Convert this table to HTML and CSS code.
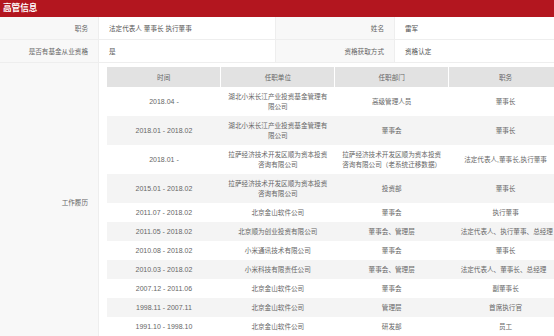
FILE: index.html
```html
<!DOCTYPE html>
<html lang="zh-CN">
<head>
  <meta charset="UTF-8" />
  <title>高管信息</title>
  <link rel="stylesheet" href="styles.css">
</head>
<body>
  <section class="panel">
    <h2 class="panel-title">高管信息</h2>
    <table class="info-table">
      <colgroup>
        <col style="width:99px">
        <col style="width:177px">
        <col style="width:119px">
        <col style="width:181px">
      </colgroup>
      <tr>
        <td class="label">职务</td>
        <td class="value">法定代表人 董事长 执行董事</td>
        <td class="label">姓名</td>
        <td class="value">雷军</td>
      </tr>
      <tr>
        <td class="label">是否有基金从业资格</td>
        <td class="value">是</td>
        <td class="label">资格获取方式</td>
        <td class="value">资格认定</td>
      </tr>
      <tr>
        <td class="label">工作履历</td>
        <td class="history-cell" colspan="3">
          <table class="history">
            <thead>
              <tr>
                <th>时间</th>
                <th>任职单位</th>
                <th>任职部门</th>
                <th>职务</th>
              </tr>
            </thead>
            <tbody>
              <tr>
                <td class="date">2018.04 -</td>
                <td>湖北小米长江产业投资基金管理有限公司</td>
                <td>高级管理人员</td>
                <td>董事长</td>
              </tr>
              <tr>
                <td class="date">2018.01 - 2018.02</td>
                <td>湖北小米长江产业投资基金管理有限公司</td>
                <td>董事会</td>
                <td>董事长</td>
              </tr>
              <tr>
                <td class="date">2018.01 -</td>
                <td>拉萨经济技术开发区顺为资本投资咨询有限公司</td>
                <td>拉萨经济技术开发区顺为资本投资咨询有限公司（老系统迁移数据）</td>
                <td>法定代表人,董事长,执行董事</td>
              </tr>
              <tr>
                <td class="date">2015.01 - 2018.02</td>
                <td>拉萨经济技术开发区顺为资本投资咨询有限公司</td>
                <td>投资部</td>
                <td>董事长</td>
              </tr>
              <tr>
                <td class="date">2011.07 - 2018.02</td>
                <td>北京金山软件公司</td>
                <td>董事会</td>
                <td>执行董事</td>
              </tr>
              <tr>
                <td class="date">2011.05 - 2018.02</td>
                <td>北京顺为创业投资有限公司</td>
                <td>董事会、管理层</td>
                <td class="nowrap">法定代表人、执行董事、总经理</td>
              </tr>
              <tr>
                <td class="date">2010.08 - 2018.02</td>
                <td>小米通讯技术有限公司</td>
                <td>董事会</td>
                <td>董事长</td>
              </tr>
              <tr>
                <td class="date">2010.03 - 2018.02</td>
                <td>小米科技有限责任公司</td>
                <td>董事会、管理层</td>
                <td class="nowrap">法定代表人、董事长、总经理</td>
              </tr>
              <tr>
                <td class="date">2007.12 - 2011.06</td>
                <td>北京金山软件公司</td>
                <td>董事会</td>
                <td>副董事长</td>
              </tr>
              <tr>
                <td class="date">1998.11 - 2007.11</td>
                <td>北京金山软件公司</td>
                <td>管理层</td>
                <td>首席执行官</td>
              </tr>
              <tr>
                <td class="date">1991.10 - 1998.10</td>
                <td>北京金山软件公司</td>
                <td>研发部</td>
                <td>员工</td>
              </tr>
            </tbody>
          </table>
        </td>
      </tr>
    </table>
  </section>
</body>
</html>
```

FILE: styles.css
```css
body {
  margin: 0;
  padding: 0;
  overflow: hidden;
  background: #fff;
  font-family: "Liberation Sans", "Noto Sans CJK SC", sans-serif;
  color: #666;
}

.panel {
  width: 576px;
}

.panel-title {
  margin: 0;
  height: 17px;
  line-height: 17px;
  padding-left: 3px;
  background: #b3161f;
  color: #fff;
  font-size: 8.6px;
  font-weight: 700;
}

.info-table {
  width: 576px;
  table-layout: fixed;
  border-collapse: separate;
  border-spacing: 0;
  font-size: 6.6px;
}

.info-table > tbody > tr > td {
  box-sizing: border-box;
  border-right: 1px solid #eeeeee;
  border-bottom: 1px solid #eeeeee;
  height: 23px;
  padding: 0 10px;
  vertical-align: middle;
}

.info-table .label {
  background: #f8f8f8;
  text-align: right;
  color: #666;
}

.info-table .value {
  color: #555;
}

.info-table .history-cell {
  padding: 4px 0 4px 8px;
}

/* work history */
.history {
  width: 456px;
  table-layout: fixed;
  border-collapse: collapse;
  font-size: 6.6px;
  color: #666;
}

.history th {
  height: 20px;
  padding: 0;
  background: #e2e2e2;
  border-right: 1px solid #fff;
  font-weight: 400;
  color: #666;
}

.history td {
  padding: 4.5px 7px;
  line-height: 10px;
  text-align: center;
  vertical-align: middle;
}

.history tbody tr:nth-child(even) td {
  background: #f4f4f4;
}

.history .date {
  font-size: 7px;
}

.history .nowrap {
  white-space: nowrap;
  text-align: left;
  padding-left: 12px;
}
```
